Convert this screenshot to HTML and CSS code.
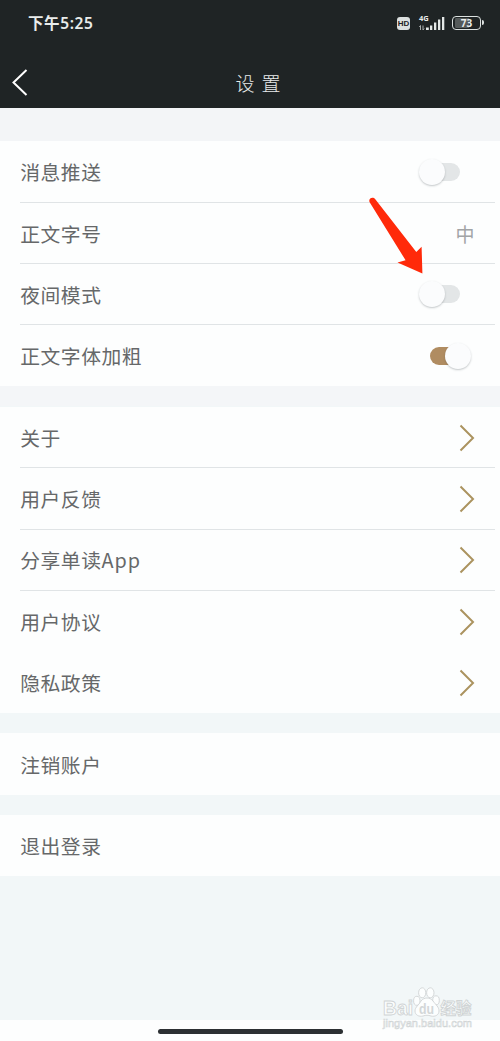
FILE: index.html
```html
<!DOCTYPE html>
<html lang="zh-CN">
<head>
  <meta charset="UTF-8">
  <title>设置</title>
  <link rel="stylesheet" href="styles.css">
</head>
<body>
<div class="screen">
  <header class="header">
    <div class="status-bar">
      <span class="clock">下午5:25</span>
      <div class="status-icons">
        <span class="hd">HD</span>
        <div class="signal">
          <span class="net">4G</span>
          <svg width="28" height="15" viewBox="0 0 28 15">
            <path d="M3.500 14V9.500M2.300 11l1.200-1.500M6 9.500V14l1.200-1.500" fill="none" stroke="#a9adad" stroke-width="1"/>
            <path d="M9 14v-2.500h2.800V14zM13 14V9.500h2.300V14zM17 14V6.500h2.300V14zM21 14V3.500h2.300V14zM25 14V1h2.300v13z" fill="#e4e8e7"/>
          </svg>
        </div>
        <span class="battery">73</span>
      </div>
    </div>
    <nav class="nav">
      <svg class="back" width="18" height="28" viewBox="0 0 18 28">
        <path d="M15.500 2L2.500 14.500L15.500 27" fill="none" stroke="#fff" stroke-width="2"/>
      </svg>
      <h1 class="title">设置</h1>
    </nav>
  </header>

  <main class="content">
    <section class="group first">
      <div class="row"><span>消息推送</span><i class="switch"></i></div>
      <div class="row"><span>正文字号</span><span class="value">中</span></div>
      <div class="row"><span>夜间模式</span><i class="switch"></i></div>
      <div class="row"><span>正文字体加粗</span><i class="switch on"></i></div>
    </section>

    <section class="group">
      <div class="row"><span>关于</span><svg class="chevron" viewBox="0 0 16 28"><path d="M1.500 1.500L14 14L1.500 26.500"/></svg></div>
      <div class="row"><span>用户反馈</span><svg class="chevron" viewBox="0 0 16 28"><path d="M1.500 1.500L14 14L1.500 26.500"/></svg></div>
      <div class="row"><span>分享单读<span class="latin">App</span></span><svg class="chevron" viewBox="0 0 16 28"><path d="M1.500 1.500L14 14L1.500 26.500"/></svg></div>
      <div class="row plain"><span>用户协议</span><svg class="chevron" viewBox="0 0 16 28"><path d="M1.500 1.500L14 14L1.500 26.500"/></svg></div>
      <div class="row"><span>隐私政策</span><svg class="chevron" viewBox="0 0 16 28"><path d="M1.500 1.500L14 14L1.500 26.500"/></svg></div>
    </section>

    <section class="group">
      <div class="row"><span>注销账户</span></div>
    </section>

    <section class="group">
      <div class="row"><span>退出登录</span></div>
    </section>
  </main>

  <footer class="home"><div class="home-bar"></div></footer>

  <!-- 红色箭头 -->
  <svg class="arrow" width="60" height="82" viewBox="0 0 60 82">
    <path d="M2.500 6C1.200 2.500 5.800 0 8.300 3.300L49.300 56L54.600 50.800L55.400 77.500L30.500 66.500L38.600 64.300z" fill="#ff2a0a"/>
  </svg>

  <!-- 水印 -->
  <svg class="watermark" width="100" height="48" viewBox="0 0 100 48">
    <g class="mark">
      <text x="3" y="30" font-size="20" textLength="30" lengthAdjust="spacingAndGlyphs">Bai</text>
      <ellipse cx="36.800" cy="15.800" rx="3.200" ry="4.500"/>
      <ellipse cx="42.200" cy="7.800" rx="3.600" ry="5"/>
      <ellipse cx="50.300" cy="7.800" rx="3.700" ry="5"/>
      <ellipse cx="56" cy="15.300" rx="3.300" ry="4.500"/>
      <path d="M41 16c3-4 9-4 12 0c3 4 6 6 6 10c0 4-4 6-8 5c-3-1-5-1-8 0c-4 1-8-1-8-5c0-4 4-6 6-10z"/>
      <text class="du" x="39" y="29" font-size="14" textLength="15" lengthAdjust="spacingAndGlyphs">du</text>
      <text x="60.500" y="29" font-size="15.500" textLength="31">经验</text>
      <text class="url" x="3" y="42" font-size="11" textLength="89">jingyan.baidu.com</text>
    </g>
  </svg>
</div>
</body>
</html>
```
FILE: styles.css
```css
/* 全体 */
html, body {
  margin: 0;
  padding: 0;
}
body {
  font-family: "Noto Sans", "Noto Sans CJK SC", sans-serif;
  color: #666869;
}
.screen {
  position: relative;
  display: flex;
  flex-direction: column;
  width: 500px;
  height: 1041px;
  overflow: hidden;
  background: #f2f7f8;
}

/* 顶部 */
.header {
  height: 108px;
  flex: none;
  background: #1f2425;
  color: #e9eceb;
}
.status-bar {
  display: flex;
  align-items: center;
  justify-content: space-between;
  height: 46px;
  padding: 0 17px 0 28px;
}
.clock {
  font: 600 15.5px/20px "Noto Sans", "Noto Sans CJK SC", sans-serif;
  letter-spacing: 0.6px;
}
.status-icons {
  display: flex;
  align-items: center;
}
.hd {
  width: 13px;
  height: 13px;
  border-radius: 3px;
  background: #dce1e0;
  color: #1f2425;
  font: bold 8px/13px "Liberation Sans", sans-serif;
  text-align: center;
}
.signal {
  position: relative;
  height: 15px;
  margin: 0 7px 0 7px;
}
.signal svg {
  display: block;
}
.net {
  position: absolute;
  left: 2px;
  top: -2px;
  font: bold 7.5px/8px "Noto Sans", sans-serif;
}
.battery {
  position: relative;
  box-sizing: border-box;
  width: 29px;
  height: 14px;
  margin-right: 2px;
  border: 1.5px solid #dce1e0;
  border-radius: 4px;
  background: linear-gradient(90deg, #555a5a 60%, #1f2425 60%) content-box;
  padding: 1px 2px;
  font: bold 10px/11px "Noto Sans", sans-serif;
  text-align: center;
}
.battery::after {
  content: "";
  position: absolute;
  right: -4px;
  top: 3px;
  width: 2px;
  height: 5px;
  border-radius: 0 2px 2px 0;
  background: #dce1e0;
}
.nav {
  display: grid;
  grid-template-columns: 36px 1fr 24px;
  align-items: center;
  height: 62px;
  padding: 0 0 0 11px;
  box-sizing: border-box;
}
.nav .back {
  margin-top: 10px;
}
.title {
  margin: 11px 0 0;
  font: 300 19px/28px "Noto Sans CJK SC", sans-serif;
  letter-spacing: 7px;
  text-align: center;
}

/* 设置列表 */
.content {
  flex: 1;
  padding-top: 33px;
  background: linear-gradient(#f3f5f7 33px, #f2f7f8 33px);
}
.group {
  margin-bottom: 20.5px;
  background: #fdfefe;
}
.group.first {
  box-shadow: 0 20px 0 #f4f6f8;
}
.row {
  position: relative;
  display: flex;
  align-items: center;
  justify-content: space-between;
  box-sizing: border-box;
  height: 61.25px;
  padding: 1.5px 25px 0 20.3px;
  font: 400 19.8px/30px "Noto Sans CJK SC", sans-serif;
  letter-spacing: 0.5px;
}
/* 分隔线 */
.row:not(:last-child):not(.plain)::after {
  content: "";
  position: absolute;
  left: 20px;
  right: 5px;
  bottom: -0.5px;
  height: 1px;
  background: #e0e4e6;
}
.latin {
  letter-spacing: 1px;
}
.value {
  color: #a2a4a6;
  font-size: 19px;
}
.chevron {
  width: 16px;
  height: 28px;
}
.chevron path {
  fill: none;
  stroke: #ab935f;
  stroke-width: 2;
}

/* 开关 */
.switch {
  position: relative;
  top: -0.5px;
  width: 31px;
  height: 18px;
  margin-right: 15px;
  border-radius: 9px;
  background: #e3e6e7;
}
.switch::after {
  content: "";
  position: absolute;
  left: -10px;
  top: -4px;
  width: 26px;
  height: 26px;
  border-radius: 50%;
  background: #fbfcfd;
  box-shadow: 0 1px 2px rgba(60, 70, 75, 0.3);
}
.switch.on {
  margin-right: 9px;
  background: #b08c61;
  width: 36px;
}
.switch.on::after {
  left: 15px;
}

/* 底部导航条 */
.home {
  display: flex;
  justify-content: center;
  flex: none;
  height: 21px;
  background: #fdfefe;
}
.home-bar {
  width: 185px;
  height: 5px;
  margin-top: 9px;
  border-radius: 3px;
  background: #2c3033;
}

.arrow {
  position: absolute;
  left: 367px;
  top: 196px;
}
.watermark {
  position: absolute;
  left: 380px;
  top: 985px;
}
.mark {
  fill: #fcfefe;
  stroke: #d0d4d5;
  stroke-width: 0.9;
  font-family: "Liberation Sans", "Noto Sans CJK SC", sans-serif;
  font-weight: bold;
}
.mark .du {
  fill: #d3d7d8;
  stroke: none;
}
.mark .url {
  font-weight: normal;
  stroke-width: 0.6;
}
```
